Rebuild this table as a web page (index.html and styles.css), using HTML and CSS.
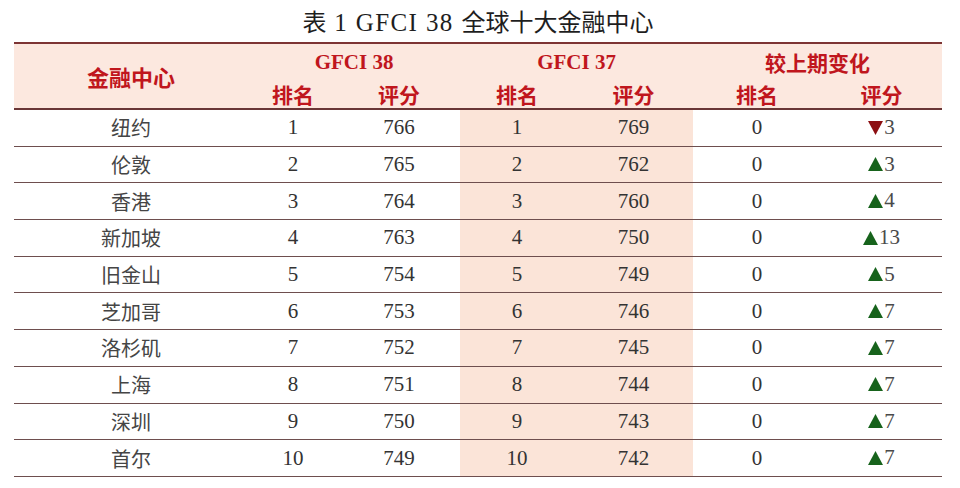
FILE: index.html
```html
<!DOCTYPE html>
<html lang="zh">
<head>
<meta charset="utf-8">
<title>GFCI 38</title>
<link rel="stylesheet" href="styles.css">
</head>
<body>
<div class="page">
  <h1 class="title">表<span class="lat"> 1 GFCI 38 </span>全球十大金融中心</h1>
  <table class="tbl">
    <colgroup>
      <col class="c1"><col class="c2"><col class="c3"><col class="c4"><col class="c5"><col class="c6"><col class="c7">
    </colgroup>
    <thead>
      <tr class="h1">
        <th rowspan="2" class="cjk">金融中心</th>
        <th colspan="2" class="lat">GFCI 38</th>
        <th colspan="2" class="lat">GFCI 37</th>
        <th colspan="2" class="cjk">较上期变化</th>
      </tr>
      <tr class="h2">
        <th class="cjk">排名</th><th class="cjk">评分</th>
        <th class="cjk">排名</th><th class="cjk">评分</th>
        <th class="cjk">排名</th><th class="cjk">评分</th>
      </tr>
    </thead>
    <tbody>
      <tr><td class="city">纽约</td><td>1</td><td>766</td><td class="sh">1</td><td class="sh">769</td><td>0</td><td><span class="chg"><svg class="tri" viewBox="0 0 15 14"><polygon points="0,0 15,0 7.5,14" fill="#8c0f12"/></svg>3</span></td></tr>
      <tr><td class="city">伦敦</td><td>2</td><td>765</td><td class="sh">2</td><td class="sh">762</td><td>0</td><td><span class="chg"><svg class="tri" viewBox="0 0 15 14"><polygon points="0,14 15,14 7.5,0" fill="#17631c"/></svg>3</span></td></tr>
      <tr><td class="city">香港</td><td>3</td><td>764</td><td class="sh">3</td><td class="sh">760</td><td>0</td><td><span class="chg"><svg class="tri" viewBox="0 0 15 14"><polygon points="0,14 15,14 7.5,0" fill="#17631c"/></svg>4</span></td></tr>
      <tr><td class="city">新加坡</td><td>4</td><td>763</td><td class="sh">4</td><td class="sh">750</td><td>0</td><td><span class="chg"><svg class="tri" viewBox="0 0 15 14"><polygon points="0,14 15,14 7.5,0" fill="#17631c"/></svg>13</span></td></tr>
      <tr><td class="city">旧金山</td><td>5</td><td>754</td><td class="sh">5</td><td class="sh">749</td><td>0</td><td><span class="chg"><svg class="tri" viewBox="0 0 15 14"><polygon points="0,14 15,14 7.5,0" fill="#17631c"/></svg>5</span></td></tr>
      <tr><td class="city">芝加哥</td><td>6</td><td>753</td><td class="sh">6</td><td class="sh">746</td><td>0</td><td><span class="chg"><svg class="tri" viewBox="0 0 15 14"><polygon points="0,14 15,14 7.5,0" fill="#17631c"/></svg>7</span></td></tr>
      <tr><td class="city">洛杉矶</td><td>7</td><td>752</td><td class="sh">7</td><td class="sh">745</td><td>0</td><td><span class="chg"><svg class="tri" viewBox="0 0 15 14"><polygon points="0,14 15,14 7.5,0" fill="#17631c"/></svg>7</span></td></tr>
      <tr><td class="city">上海</td><td>8</td><td>751</td><td class="sh">8</td><td class="sh">744</td><td>0</td><td><span class="chg"><svg class="tri" viewBox="0 0 15 14"><polygon points="0,14 15,14 7.5,0" fill="#17631c"/></svg>7</span></td></tr>
      <tr><td class="city">深圳</td><td>9</td><td>750</td><td class="sh">9</td><td class="sh">743</td><td>0</td><td><span class="chg"><svg class="tri" viewBox="0 0 15 14"><polygon points="0,14 15,14 7.5,0" fill="#17631c"/></svg>7</span></td></tr>
      <tr><td class="city">首尔</td><td>10</td><td>749</td><td class="sh">10</td><td class="sh">742</td><td>0</td><td><span class="chg"><svg class="tri" viewBox="0 0 15 14"><polygon points="0,14 15,14 7.5,0" fill="#17631c"/></svg>7</span></td></tr>
    </tbody>
  </table>
</div>
</body>
</html>
```
FILE: styles.css
```css
html, body {
  margin: 0;
  padding: 0;
  background: #ffffff;
}
.page {
  width: 960px;
  height: 488px;
  padding: 0 0 0 14px;
  box-sizing: border-box;
  overflow: hidden;
}
.title {
  margin: 0;
  width: 928px;
  height: 42px;
  line-height: 42px;
  text-align: center;
  font-family: "Noto Sans CJK SC", sans-serif;
  font-weight: 400;
  font-size: 24px;
  color: #1e1e1e;
  white-space: pre;
}
.title .lat {
  font-family: "Liberation Serif", serif;
  font-size: 25px;
  letter-spacing: 1.4px;
}
.tbl {
  width: 928px;
  border-collapse: collapse;
  table-layout: fixed;
  border-top: 2px solid #7d3434;
}
.c1 { width: 234px; }
.c2 { width: 90px; }
.c3 { width: 122px; }
.c4 { width: 114px; }
.c5 { width: 119px; }
.c6 { width: 128px; }
.c7 { width: 121px; }
.tbl th {
  background: #fce8df;
  color: #c0161d;
  font-weight: 700;
  text-align: center;
  padding: 0;
  font-size: 21px;
}
.tbl th.cjk {
  font-family: "Noto Sans CJK SC", sans-serif;
  font-weight: 700;
}
.tbl th.lat {
  font-family: "Liberation Serif", serif;
  font-weight: 700;
  font-size: 21px;
}
.h1 th {
  height: 36px;
  line-height: 36px;
}
.h1 th[rowspan] {
  font-size: 22px;
  line-height: 26px;
}
.h2 th {
  height: 28px;
  line-height: 28px;
}
thead tr.h2 th, thead th[rowspan] {
  border-bottom: 2px solid #6a3636;
}
.tbl td {
  height: 35.7px;
  padding: 0;
  text-align: center;
  font-family: "Liberation Serif", serif;
  font-size: 21px;
  color: #333333;
  border-bottom: 1px solid #6e4e4e;
}
.tbl td.city {
  font-family: "Noto Sans CJK SC", sans-serif;
  font-size: 20px;
  color: #454545;
}
.tbl td.sh {
  background: #fbe4d8;
}
.chg {
  display: inline-flex;
  align-items: center;
  gap: 1px;
  color: #4a4a4a;
}
.tri {
  width: 15px;
  height: 14px;
  display: block;
}
```
